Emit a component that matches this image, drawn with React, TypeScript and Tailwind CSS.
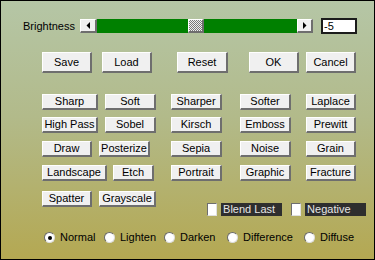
import React from 'react';

const Btn = ({ label, className }: { label: string; className: string }) => {
  return (
    <div
      className={`flex items-center justify-center bg-[#f0f0f0] border-t border-l border-t-white border-l-white border-r-2 border-b-2 border-r-[#6e6e6e] border-b-[#6e6e6e] text-black leading-none ${className}`}
    >
      {label}
    </div>
  );
};

const Arrow = ({ dir }: { dir: 'left' | 'right' }) => (
  <div className="w-full h-full flex items-center justify-center bg-[#f0f0f0] border-t border-l border-t-white border-l-white border-r-2 border-b-2 border-r-[#6e6e6e] border-b-[#6e6e6e]">
    <svg width="4" height="7" viewBox="0 0 4 7">
      {dir === 'left' ? <polygon points="4,0 4,7 0.5,3.5" fill="#000" /> : <polygon points="0,0 0,7 3.5,3.5" fill="#000" />}
    </svg>
  </div>
);

const Check = ({ label, className }: { label: string; className: string }) => (
  <div className={`flex items-center ${className}`}>
    <div className="w-[12px] h-[13px] bg-white border-t border-l border-t-[#6e6e6e] border-l-[#6e6e6e] border-r border-b border-r-[#e0e0e0] border-b-[#e0e0e0]" />
    <div className="ml-[4px] h-[13px] flex items-center pl-[2px] bg-[#2e2e2e] text-[#e6e6e6] leading-none w-full">
      {label}
    </div>
  </div>
);

const Radio = ({ label, checked, className }: { label: string; checked?: boolean; className: string }) => (
  <div className={`flex items-center ${className}`}>
    <div className="w-[11px] h-[11px] rounded-full bg-white border border-t-[#6a6a6a] border-l-[#6a6a6a] border-b-[#dcdcdc] border-r-[#dcdcdc] flex items-center justify-center">
      {checked && <div className="w-[4px] h-[4px] rounded-full bg-black" />}
    </div>
    <span className="ml-[5px] leading-none">{label}</span>
  </div>
);

const App = () => {
  return (
    <div className="w-[375px] h-[260px] border border-black bg-[linear-gradient(180deg,#b5c6a6_0%,#b2ba8a_45%,#b4a852_100%)] font-['Liberation_Sans',Arial,sans-serif] text-[11px] text-black flex flex-col overflow-hidden">
      {/* Brightness slider */}
      <div className="mt-[17px] h-[16px] flex items-center">
        <span className="ml-[22px] w-[57px] leading-none">Brightness</span>
        <div className="w-[233px] h-[14px] flex">
          <div className="w-[17px] h-full"><Arrow dir="left" /></div>
          <div className="w-[200px] h-full bg-[#008000] flex items-stretch">
            <div className="ml-[91px] w-[16px] border-t border-l border-t-white border-l-white border-r-2 border-b-2 border-r-[#6e6e6e] border-b-[#6e6e6e] bg-[repeating-conic-gradient(#7a7a7a_0_25%,#f0f0f0_0_50%)] bg-[length:2px_2px]" />
          </div>
          <div className="w-[16px] h-full"><Arrow dir="right" /></div>
        </div>
        <div className="ml-[8px] w-[36px] h-[16px] bg-white border-2 border-[#1c1c1c] flex items-center pl-[1px] leading-none">-5</div>
      </div>

      {/* Main buttons */}
      <div className="mt-[18px] h-[21px] flex">
        <Btn label="Save" className="ml-[41px] w-[50px]" />
        <Btn label="Load" className="ml-[10px] w-[50px]" />
        <Btn label="Reset" className="ml-[25px] w-[51px]" />
        <Btn label="OK" className="ml-[21px] w-[50px]" />
        <Btn label="Cancel" className="ml-[7px] w-[50px]" />
      </div>

      {/* Filters */}
      <div className="mt-[21px] h-[16px] flex">
        <Btn label="Sharp" className="ml-[41px] w-[56px]" />
        <Btn label="Soft" className="ml-[7px] w-[51px]" />
        <Btn label="Sharper" className="ml-[15px] w-[51px]" />
        <Btn label="Softer" className="ml-[18px] w-[51px]" />
        <Btn label="Laplace" className="ml-[15px] w-[50px]" />
      </div>
      <div className="mt-[7px] h-[16px] flex">
        <Btn label="High Pass" className="ml-[41px] w-[56px]" />
        <Btn label="Sobel" className="ml-[7px] w-[51px]" />
        <Btn label="Kirsch" className="ml-[15px] w-[51px]" />
        <Btn label="Emboss" className="ml-[18px] w-[51px]" />
        <Btn label="Prewitt" className="ml-[15px] w-[50px]" />
      </div>
      <div className="mt-[8px] h-[16px] flex">
        <Btn label="Draw" className="ml-[41px] w-[50px]" />
        <Btn label="Posterize" className="ml-[7px] w-[51px]" />
        <Btn label="Sepia" className="ml-[21px] w-[51px]" />
        <Btn label="Noise" className="ml-[18px] w-[51px]" />
        <Btn label="Grain" className="ml-[15px] w-[50px]" />
      </div>
      <div className="mt-[8px] h-[16px] flex">
        <Btn label="Landscape" className="ml-[41px] w-[65px]" />
        <Btn label="Etch" className="ml-[6px] w-[41px]" />
        <Btn label="Portrait" className="ml-[17px] w-[51px]" />
        <Btn label="Graphic" className="ml-[18px] w-[51px]" />
        <Btn label="Fracture" className="ml-[15px] w-[50px]" />
      </div>
      <div className="mt-[10px] flex items-start">
        <Btn label="Spatter" className="ml-[41px] w-[50px] h-[16px]" />
        <Btn label="Grayscale" className="ml-[7px] w-[57px] h-[16px]" />
        <Check label="Blend Last" className="ml-[51px] mt-[12px] w-[75px]" />
        <Check label="Negative" className="ml-[9px] mt-[12px] w-[75px]" />
      </div>

      {/* Blend modes */}
      <div className="mt-[16px] h-[11px] flex items-center">
        <Radio label="Normal" checked className="ml-[43px] w-[60px]" />
        <Radio label="Lighten" className="w-[60px]" />
        <Radio label="Darken" className="w-[63px]" />
        <Radio label="Difference" className="w-[77px]" />
        <Radio label="Diffuse" className="w-[60px]" />
      </div>
    </div>
  );
};

export default App;
